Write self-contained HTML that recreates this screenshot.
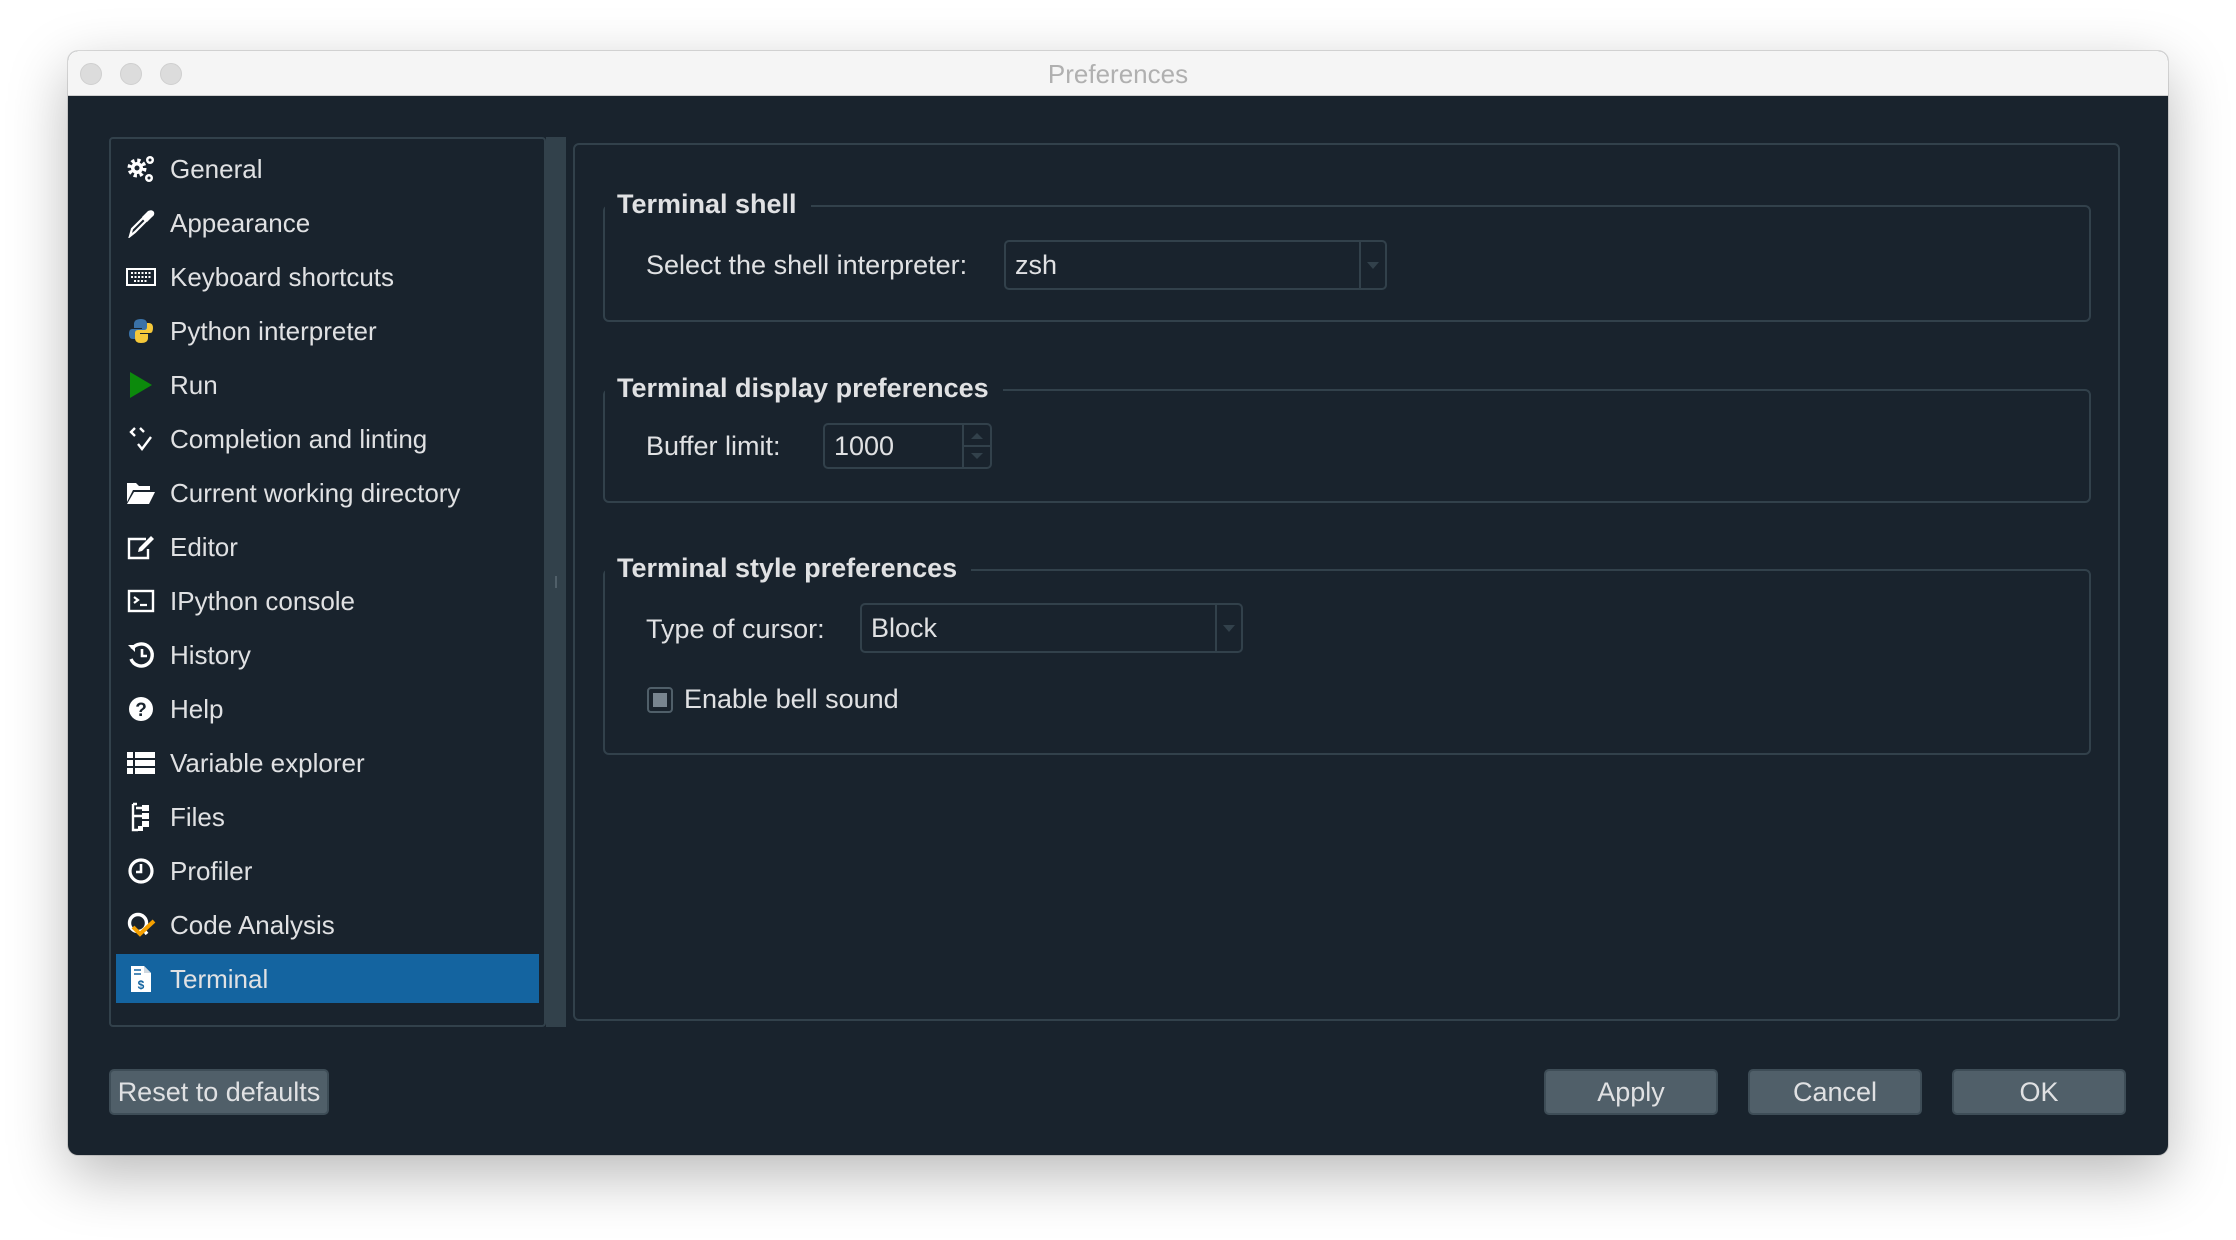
<!DOCTYPE html>
<html><head><meta charset="utf-8"><style>
*{margin:0;padding:0;box-sizing:border-box}
body{width:2236px;height:1240px;background:#fff;position:relative;overflow:hidden;font-family:"Liberation Sans",sans-serif;color:#e0e1e3}
.win{position:absolute;left:68px;top:51px;width:2100px;height:1104px;border-radius:10px;background:#19232d;box-shadow:0 20px 60px rgba(0,0,0,.28),0 0 0 1px rgba(0,0,0,.12);overflow:hidden}
.tb{position:absolute;left:0;top:0;width:100%;height:45px;background:#f5f5f5;border-bottom:1px solid #d0d0d0}
.dot{position:absolute;top:12px;width:22px;height:22px;border-radius:50%;background:#dcdcdc;border:1px solid #cfcfcf}
.title{position:absolute;left:0;width:100%;top:8px;text-align:center;font-size:26px;color:#b0b0b0}
.abs{position:absolute}
.side{left:41px;top:86px;width:437px;height:890px;border:2px solid #32414b;border-radius:4px;background:#19232d}
.strip{left:478px;top:86px;width:20px;height:890px;background:#32414b}
.item{position:absolute;left:102px;font-size:26px;height:52px;line-height:52px;white-space:nowrap}
.ic{position:absolute;left:58px;width:30px;height:30px}
.sel{left:48px;top:903px;width:423px;height:49px;background:#1464a0}
.panel{left:505px;top:92px;width:1547px;height:878px;border:2px solid #32414b;border-radius:6px}
.grp{position:absolute;border:2px solid #32414b;border-radius:6px}
.gt{position:absolute;font-weight:bold;font-size:27px;background:#19232d;padding:0 14px 0 12px;white-space:nowrap}
.lbl{position:absolute;font-size:27px;white-space:nowrap}
.combo{position:absolute;border:2px solid #32414b;border-radius:5px;font-size:27px;padding-left:9px}
.combo .sep{position:absolute;right:24px;top:0;bottom:0;border-left:2px solid #32414b}
.combo .arr{position:absolute;right:6px;top:50%;margin-top:-3px;border-left:6px solid transparent;border-right:6px solid transparent;border-top:7px solid #32414b}
.btn{position:absolute;top:1018px;height:46px;background:#505f69;border:2px solid #3e4d57;border-radius:5px;font-size:27px;text-align:center;line-height:42px}
</style></head><body>
<div class="win">
 <div class="tb"><div class="dot" style="left:12px"></div><div class="dot" style="left:52px"></div><div class="dot" style="left:92px"></div><div class="title">Preferences</div></div>
 <div class="abs side"></div>
 <div class="abs strip"></div>
 <div class="abs" style="left:487px;top:525px;width:2px;height:12px;background:#505f69"></div>
 <div class="abs sel"></div>
 <svg class="ic" style="top:103px" viewBox="0 0 30 30"><circle cx="11" cy="14" r="7" fill="none" stroke="#fff" stroke-width="5" stroke-dasharray="3 2.5"/><circle cx="11" cy="14" r="6" fill="#fff"/><circle cx="11" cy="14" r="2.5" fill="#19232d"/><circle cx="24" cy="6" r="4" fill="#fff"/><circle cx="23" cy="24" r="4" fill="#fff"/><circle cx="24" cy="6" r="1.5" fill="#19232d"/><circle cx="23" cy="24" r="1.5" fill="#19232d"/></svg>
 <div class="item" style="top:92px">General</div>
 <svg class="ic" style="top:157px" viewBox="0 0 30 30"><path d="M4 28 L6 21 L17 10 L20 13 L9 24 Z" fill="none" stroke="#fff" stroke-width="2.2"/><path d="M16 9 L22 3 Q26 1 28 4 Q29 7 26 9 L21 14 Z" fill="#fff"/></svg>
 <div class="item" style="top:146px">Appearance</div>
 <svg class="ic" style="top:211px" viewBox="0 0 30 30"><rect x="1" y="7" width="28" height="16" fill="none" stroke="#fff" stroke-width="2"/><path d="M5 11h20M5 15h20M8 19h14" stroke="#fff" stroke-width="2" stroke-dasharray="2 1.5"/></svg>
 <div class="item" style="top:200px">Keyboard shortcuts</div>
 <svg class="ic" style="top:265px" viewBox="0 0 30 30"><path d="M15 3 Q8 3 8 8 V12 H16 V13 H6 Q3 13 3 18 Q3 23 7 23 H9 V19 Q9 16 12 16 H18 Q21 16 21 13 V8 Q21 3 15 3Z" fill="#3a72a8"/><path d="M15 27 Q22 27 22 22 V18 H14 V17 H24 Q27 17 27 12 Q27 7 23 7 H21 V11 Q21 14 18 14 H12 Q9 14 9 17 V22 Q9 27 15 27Z" fill="#f5c83a"/></svg>
 <div class="item" style="top:254px">Python interpreter</div>
 <svg class="ic" style="top:319px" viewBox="0 0 30 30"><path d="M4 2 L26 15 L4 28Z" fill="#0c8a0c"/></svg>
 <div class="item" style="top:308px">Run</div>
 <svg class="ic" style="top:373px" viewBox="0 0 30 30"><path d="M9 4 L5 8 L9 12 M14 4 L18 8 M12 20 L16 25 L25 13" fill="none" stroke="#fff" stroke-width="2.4"/></svg>
 <div class="item" style="top:362px">Completion and linting</div>
 <svg class="ic" style="top:427px" viewBox="0 0 30 30"><path d="M1 5 H10 L13 8 H24 V12 H7 L1 24Z" fill="#fff"/><path d="M8 14 H29 L23 26 H1Z" fill="#fff"/></svg>
 <div class="item" style="top:416px">Current working directory</div>
 <svg class="ic" style="top:481px" viewBox="0 0 30 30"><path d="M20 7 H3 V26 H22 V17" fill="none" stroke="#fff" stroke-width="2.4"/><path d="M12 20 L13 16 L25 4 L28 7 L16 19Z" fill="#fff"/></svg>
 <div class="item" style="top:470px">Editor</div>
 <svg class="ic" style="top:535px" viewBox="0 0 30 30"><rect x="3" y="5" width="24" height="20" fill="none" stroke="#fff" stroke-width="2.4"/><path d="M8 11 L12 14 L8 17 M14 19 H21" fill="none" stroke="#fff" stroke-width="2.2"/></svg>
 <div class="item" style="top:524px">IPython console</div>
 <svg class="ic" style="top:589px" viewBox="0 0 30 30"><path d="M6 9 A11 11 0 1 1 5 19" fill="none" stroke="#fff" stroke-width="3.4"/><path d="M2 5 L9 5 L9 12Z" fill="#fff"/><path d="M16 9 V16 H21" fill="none" stroke="#fff" stroke-width="2.6"/></svg>
 <div class="item" style="top:578px">History</div>
 <svg class="ic" style="top:643px" viewBox="0 0 30 30"><circle cx="15" cy="15" r="12" fill="#fff"/><text x="15" y="22" text-anchor="middle" font-size="19" font-weight="bold" fill="#19232d" font-family="Liberation Sans">?</text></svg>
 <div class="item" style="top:632px">Help</div>
 <svg class="ic" style="top:697px" viewBox="0 0 30 30"><path d="M1 4h6v6H1zM9 4h20v6H9zM1 12h6v6H1zM9 12h20v6H9zM1 20h6v6H1zM9 20h20v6H9z" fill="#fff"/></svg>
 <div class="item" style="top:686px">Variable explorer</div>
 <svg class="ic" style="top:751px" viewBox="0 0 30 30"><path d="M7 2 H11 M7 2 V28 H12 M7 14 H16 M10 6 H16" fill="none" stroke="#fff" stroke-width="2.4"/><rect x="16" y="3" width="7" height="6" fill="#fff"/><rect x="16" y="11" width="7" height="6" fill="#fff"/><rect x="16" y="19" width="7" height="6" fill="#fff"/><rect x="12" y="24" width="5" height="5" fill="#fff"/></svg>
 <div class="item" style="top:740px">Files</div>
 <svg class="ic" style="top:805px" viewBox="0 0 30 30"><circle cx="15" cy="15" r="11" fill="none" stroke="#fff" stroke-width="3.2"/><path d="M15 8 V16 H10" fill="none" stroke="#fff" stroke-width="2.6"/></svg>
 <div class="item" style="top:794px">Profiler</div>
 <svg class="ic" style="top:859px" viewBox="0 0 30 30"><circle cx="12" cy="13" r="8.5" fill="none" stroke="#fff" stroke-width="3.4"/><path d="M17 19 L21 24" stroke="#fff" stroke-width="3.5"/><path d="M7 17 L14 24 L28 11" fill="none" stroke="#f5a000" stroke-width="4"/></svg>
 <div class="item" style="top:848px">Code Analysis</div>
 <svg class="ic" style="top:913px" viewBox="0 0 30 30"><path d="M5 2 H18 L25 9 V28 H5Z" fill="#fff"/><path d="M18 2 V9 H25" fill="#cfd8e0"/><path d="M8 6h7M8 10h7" stroke="#1464a0" stroke-width="1.6"/><text x="15" y="25" text-anchor="middle" font-size="12" font-weight="bold" fill="#1464a0" font-family="Liberation Sans">$</text></svg>
 <div class="item" style="top:902px">Terminal</div>

 <div class="abs panel"></div>
 <div class="grp" style="left:535px;top:154px;width:1488px;height:117px"></div>
 <div class="gt" style="left:537px;top:138px">Terminal shell</div>
 <div class="lbl" style="left:578px;top:199px">Select the shell interpreter:</div>
 <div class="combo" style="left:936px;top:189px;width:383px;height:50px;line-height:46px">zsh<div class="sep"></div><div class="arr"></div></div>
 <div class="grp" style="left:535px;top:338px;width:1488px;height:114px"></div>
 <div class="gt" style="left:537px;top:322px">Terminal display preferences</div>
 <div class="lbl" style="left:578px;top:380px">Buffer limit:</div>
 <div class="combo" style="left:755px;top:372px;width:169px;height:46px;line-height:42px">1000<div class="sep" style="right:26px"></div>
  <div class="abs" style="right:0;top:20px;width:26px;border-top:2px solid #32414b"></div>
  <div class="abs" style="right:7px;top:8px;border-left:6px solid transparent;border-right:6px solid transparent;border-bottom:6px solid #32414b"></div>
  <div class="abs" style="right:7px;bottom:8px;border-left:6px solid transparent;border-right:6px solid transparent;border-top:6px solid #32414b"></div></div>
 <div class="grp" style="left:535px;top:518px;width:1488px;height:186px"></div>
 <div class="gt" style="left:537px;top:502px">Terminal style preferences</div>
 <div class="lbl" style="left:578px;top:563px">Type of cursor:</div>
 <div class="combo" style="left:792px;top:552px;width:383px;height:50px;line-height:46px">Block<div class="sep"></div><div class="arr"></div></div>
 <div class="abs" style="left:579px;top:636px;width:26px;height:26px;border:2px solid #505f69;border-radius:4px"><div class="abs" style="left:4px;top:4px;width:14px;height:14px;background:#788590"></div></div>
 <div class="lbl" style="left:616px;top:633px">Enable bell sound</div>

 <div class="btn" style="left:41px;width:220px">Reset to defaults</div>
 <div class="btn" style="left:1476px;width:174px">Apply</div>
 <div class="btn" style="left:1680px;width:174px">Cancel</div>
 <div class="btn" style="left:1884px;width:174px">OK</div>
</div>
</body></html>
